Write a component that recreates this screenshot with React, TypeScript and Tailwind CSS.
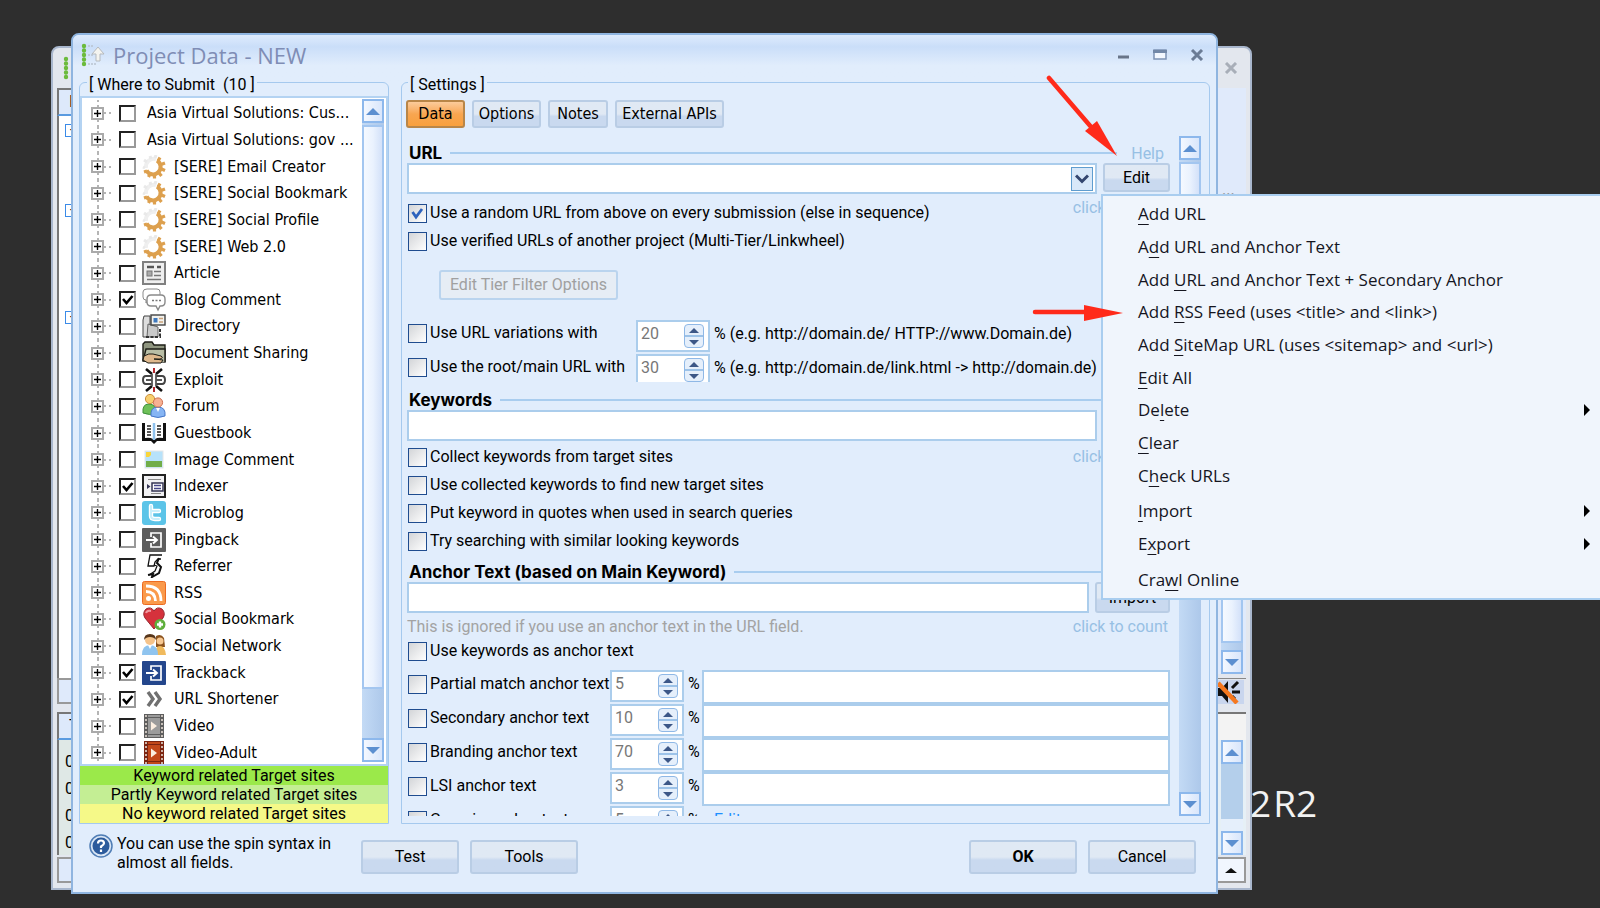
import React from 'react';

const LABEL_FONT = "font-['Roboto','Liberation_Sans',sans-serif]";
const TREE_FONT = "font-['DejaVu_Sans_Condensed','DejaVu_Sans',sans-serif]";
const MENU_FONT = "font-['Open_Sans','Noto_Sans',sans-serif]";

const GearIcon = () => (
  <svg viewBox="0 0 24 24" className="h-6 w-6">
    <path d="M4 13a8 8 0 0 1 10-9" fill="none" stroke="#efefef" strokeWidth="4" />
    <path d="M3 13l-2-1M5 7L2 5M9 4L8 1M13 3l1-3" stroke="#e9e9e9" strokeWidth="3" />
    <path d="M15 5.500a7.500 7.500 0 1 1-10.500 10" fill="none" stroke="#dda04e" strokeWidth="4" />
    <path d="M16 6l2-3.500M19 9.500l4-1.500M19.500 14l3.500 1.500M17 18l2.500 3M12.500 20v3.500M8 19l-1.500 3M5 16l-3 1" stroke="#dda04e" strokeWidth="3.200" />
  </svg>
);

const ArticleIcon = () => (
  <svg viewBox="0 0 24 24" className="h-6 w-6">
    <rect x="1" y="1" width="22" height="22" fill="#efefef" stroke="#808080" strokeWidth="2" />
    <path d="M5 6h7M15 6h4" stroke="#555" strokeWidth="2.4" />
    <rect x="5" y="10" width="5" height="5" fill="#aaa" stroke="#777" />
    <path d="M12 10.500h7M12 14.500h7M5 18.500h14" stroke="#777" strokeWidth="1.6" />
  </svg>
);

const BlogIcon = () => (
  <svg viewBox="0 0 24 24" className="h-6 w-6" fill="#fff" stroke="#8a8a8a">
    <path d="M5 1h10q3 0 3 3v5q0 3-3 3H6l-2 3v-3q-3 0-3-3V4q0-3 4-3z" />
    <path d="M9 7h10q4 0 4 4v3q0 4-4 4h-1l-2 4-2-4H9q-4 0-4-4v-3q0-4 4-4z" strokeWidth="1.4" />
    <path d="M10 12.500h2M13.500 12.500h2M17 12.500h2" stroke="#777" strokeWidth="1.6" />
  </svg>
);

const DirectoryIcon = () => (
  <svg viewBox="0 0 24 24" className="h-6 w-6">
    <path d="M2 2h6v17l-3 4H1V6z" fill="#ddd" stroke="#444" />
    <path d="M6 10l10 3v10H5z" fill="#c9c9c9" stroke="#666" />
    <path d="M4 23h15M18 15v7" stroke="#333" strokeWidth="2" strokeDasharray="3 1.500" />
    <rect x="9" y="1" width="14" height="10" fill="#f2f2ee" stroke="#444" strokeWidth="1.4" />
    <rect x="11.500" y="4" width="4" height="4.500" fill="#3f78bd" />
    <path d="M17 4.500h4M17 8h4" stroke="#caa27b" strokeWidth="1.600" />
  </svg>
);

const SharingIcon = () => (
  <svg viewBox="0 0 24 24" className="h-6 w-6" stroke="#1d1d16" strokeWidth="1.4">
    <path d="M1 20V3l2-2h7l2 3h11v17z" fill="#8f957f" />
    <path d="M1 20l3-12h19v13" fill="#b9bea6" />
    <path d="M2 15q5-3 9-2l8 2q3 2-1 3l-6 0 9 1-2 3H6l-5-3z" fill="#dfb98d" strokeWidth="1" />
  </svg>
);

const ExploitIcon = () => (
  <svg viewBox="0 0 24 24" className="h-6 w-6" fill="none">
    <path d="M12 0v5M12 19v5" stroke="#b3272d" strokeWidth="2" />
    <path d="M4 1l6 5M20 1l-6 5M4 23l6-5M20 23l-6-5" stroke="#111" strokeWidth="2.600" />
    <path d="M10 8H4q-3 0-3 4t3 4h6M14 8h6q3 0 3 4t-3 4h-6" stroke="#444" strokeWidth="2" />
    <path d="M4 12h6M14 12h6M10 6v12M14 6v12" stroke="#555" strokeWidth="1.800" />
  </svg>
);

const ForumIcon = () => (
  <svg viewBox="0 0 24 24" className="h-6 w-6">
    <path d="M1 19q-1-9 6-9t7 9q-6 3-13 0z" fill="#6fc058" stroke="#3d8f3b" />
    <circle cx="8" cy="5" r="4.600" fill="#f8cf70" stroke="#c98d3a" />
    <path d="M9 22q-1-9 7-9t7 9q-7 3-14 0z" fill="#86b5f4" stroke="#4778c9" />
    <circle cx="16" cy="8.500" r="4.600" fill="#f6b193" stroke="#cd6e50" />
    <path d="M14 14l2 4 2-4z" fill="#fff" />
  </svg>
);

const GuestbookIcon = () => (
  <svg viewBox="0 0 24 24" className="h-6 w-6">
    <path d="M0 2h24v18h-9l-3 3-3-3H0z" fill="#111" />
    <path d="M3 1q6-1 8 1v16q-3-2-8-1zM21 1q-6-1-8 1v16q3-2 8-1z" fill="#fff" />
    <path d="M12 2v17" stroke="#8fc2ee" strokeWidth="2.500" />
    <path d="M5 5h4M5 8h4M5 11h4M5 14h4M15 5h4M15 8h4M15 11h4M15 14h4" stroke="#222" strokeWidth="1.300" />
  </svg>
);

const ImageIcon = () => (
  <svg viewBox="0 0 24 24" className="h-6 w-6">
    <rect x="3" y="3" width="18" height="17" fill="#b7e2fa" stroke="#e6e6e6" />
    <path d="M4 13h16v6H4z" fill="#71ad48" />
    <path d="M4 4h5v3L7 9H4z" fill="#f9d53b" />
  </svg>
);

const IndexerIcon = () => (
  <svg viewBox="0 0 24 24" className="h-6 w-6">
    <rect x="1" y="1" width="22" height="22" fill="#f1f1f3" stroke="#222" strokeWidth="2" />
    <path d="M6 5.500h13M9 19.500h10" stroke="#888" />
    <rect x="10" y="9" width="11" height="8" fill="#fff" stroke="#333353" strokeWidth="1.500" />
    <path d="M12 11.500h7M12 14.500h7" stroke="#444488" strokeWidth="1.400" />
    <path d="M5 10l3.500 2.500L5 15z" fill="#333353" />
  </svg>
);

const TwitterIcon = () => (
  <svg viewBox="0 0 24 24" className="h-6 w-6">
    <rect width="24" height="24" rx="3" fill="#5cc4e8" />
    <path d="M9 5v10q0 3 4 3h4M9 10h8" fill="none" stroke="#fff" strokeWidth="4.400" strokeLinecap="round" />
    <path d="M9 5v10q0 3 4 3h4M9 10h8" fill="none" stroke="#c9effb" strokeWidth="2" strokeLinecap="round" />
  </svg>
);

const EnterIcon = ({ color }: { color: string }) => (
  <svg viewBox="0 0 24 24" className="h-6 w-6" fill="none">
    <rect width="24" height="24" rx="1" fill={color} />
    <path d="M9 9V5h10v14H9v-4" stroke="#fff" strokeWidth="1.700" />
    <path d="M4 12h10M11 8.500l4 3.500-4 3.500" stroke="#fff" strokeWidth="1.900" />
  </svg>
);

const ReferrerIcon = () => (
  <svg viewBox="0 0 24 24" className="h-6 w-6" fill="none" stroke="#111">
    <path d="M20 1H8L6 12h6l1-4 3-3h3" strokeWidth="1.300" />
    <path d="M17 4l-2 5 4 4-2 6-7 4 1-3-5 1" strokeWidth="2" />
    <path d="M12 11l3 1-2 5-6 4" strokeWidth="1.200" />
  </svg>
);

const RssIcon = () => (
  <svg viewBox="0 0 24 24" className="h-6 w-6">
    <rect x="0.500" y="0.500" width="23" height="23" rx="2" fill="#fa9a4b" stroke="#ec6b22" />
    <circle cx="6.500" cy="17.500" r="2.500" fill="#fff" />
    <path d="M4 10.500q9 0 9.500 9.500M4 5q15 0 15 15" fill="none" stroke="#fff" strokeWidth="2.800" />
  </svg>
);

const HeartIcon = () => (
  <svg viewBox="0 0 24 24" className="h-6 w-6">
    <path d="M12 22L3 11Q0 6 4 2q5-3 8 2 3-5 8-2 4 4 1 9z" fill="#d5323c" stroke="#962830" />
    <path d="M4 6q1-3 5-2" fill="none" stroke="#f09aa0" strokeWidth="2" />
    <circle cx="18" cy="17.500" r="5.500" fill="#5faf3c" />
    <path d="M18 14.500v6M15 17.500h6" stroke="#fff" strokeWidth="2.400" />
  </svg>
);

const NetworkIcon = () => (
  <svg viewBox="0 0 24 24" className="h-6 w-6">
    <path d="M14 2q5-3 8 2l1 9h-9z" fill="#8c531e" />
    <circle cx="18" cy="7" r="3.500" fill="#f7c892" />
    <path d="M13 21q0-9 5-9t6 9z" fill="#f0ba5d" />
    <circle cx="8" cy="6" r="5" fill="#f5c38a" />
    <path d="M2 6Q2 0 8 0t6 6q-2-3-6-3T2 6z" fill="#57351a" />
    <path d="M0 21q0-10 8-10t8 10z" fill="#8fc4ef" />
    <path d="M6 11l2 4 2-4z" fill="#fff" />
  </svg>
);

const ShortenerIcon = () => (
  <svg viewBox="0 0 24 24" className="h-6 w-6" fill="none" stroke="#707070" strokeWidth="3.400">
    <path d="M6 5l5 7-5 7M13 5l5 7-5 7" />
  </svg>
);

const VideoIcon = ({ color, edge }: { color: string; edge: string }) => (
  <svg viewBox="0 0 24 24" className="h-6 w-6">
    <rect x="2" width="20" height="24" fill={edge} />
    <rect x="6" y="1" width="12" height="22" fill={color} />
    <path d="M4 1v22M20 1v22" stroke="#e3d9d0" strokeWidth="1.600" strokeDasharray="2 2" />
    <path d="M6 3.500h12M6 20.500h12" stroke={edge} />
    <path d="M9 7.500l6 4.500-6 4.500z" fill="#fbeee0" />
  </svg>
);

const ListArrowIcon = () => (
  <svg viewBox="0 0 24 24" className="h-6 w-6">
    <path d="M3 3v0M3 7.500v0M3 12v0M3 16.500v0M3 21v0" stroke="#6cbb3c" strokeWidth="4.400" strokeLinecap="round" />
    <path d="M7 3h5M7 12h5M7 21h8" stroke="#b9c3cf" strokeWidth="1.500" strokeDasharray="2 1" />
    <path d="M17 4l6 7h-4v7h-4v-7h-4z" fill="#f4f4f0" stroke="#b5b9bd" />
  </svg>
);

interface TreeEntry {
  name: string;
  checked?: boolean;
  icon?: React.ReactNode;
}

const tree: TreeEntry[] = [
  { name: 'Asia Virtual Solutions: Cus...' },
  { name: 'Asia Virtual Solutions: gov ...' },
  { name: '[SERE] Email Creator', icon: <GearIcon /> },
  { name: '[SERE] Social Bookmark', icon: <GearIcon /> },
  { name: '[SERE] Social Profile', icon: <GearIcon /> },
  { name: '[SERE] Web 2.0', icon: <GearIcon /> },
  { name: 'Article', icon: <ArticleIcon /> },
  { name: 'Blog Comment', checked: true, icon: <BlogIcon /> },
  { name: 'Directory', icon: <DirectoryIcon /> },
  { name: 'Document Sharing', icon: <SharingIcon /> },
  { name: 'Exploit', icon: <ExploitIcon /> },
  { name: 'Forum', icon: <ForumIcon /> },
  { name: 'Guestbook', icon: <GuestbookIcon /> },
  { name: 'Image Comment', icon: <ImageIcon /> },
  { name: 'Indexer', checked: true, icon: <IndexerIcon /> },
  { name: 'Microblog', icon: <TwitterIcon /> },
  { name: 'Pingback', icon: <EnterIcon color="#5d5d5d" /> },
  { name: 'Referrer', icon: <ReferrerIcon /> },
  { name: 'RSS', icon: <RssIcon /> },
  { name: 'Social Bookmark', icon: <HeartIcon /> },
  { name: 'Social Network', icon: <NetworkIcon /> },
  { name: 'Trackback', checked: true, icon: <EnterIcon color="#24468c" /> },
  { name: 'URL Shortener', checked: true, icon: <ShortenerIcon /> },
  { name: 'Video', icon: <VideoIcon color="#9b9b9b" edge="#5e5e5e" /> },
  { name: 'Video-Adult', icon: <VideoIcon color="#c2481a" edge="#7c2410" /> }
];

const anchors = [
  { label: 'Partial match anchor text', value: '5' },
  { label: 'Secondary anchor text', value: '10' },
  { label: 'Branding anchor text', value: '70' },
  { label: 'LSI anchor text', value: '3' }
];

// text before the accelerator, the accelerator, text after it
const menu = [
  [
    { pre: '', key: 'A', post: 'dd URL' },
    { pre: 'A', key: 'd', post: 'd URL and Anchor Text' },
    { pre: 'Add ', key: 'U', post: 'RL and Anchor Text + Secondary Anchor' },
    { pre: 'Add ', key: 'R', post: 'SS Feed (uses <title> and <link>)' },
    { pre: 'Add ', key: 'S', post: 'iteMap URL (uses <sitemap> and <url>)' },
    { pre: '', key: 'E', post: 'dit All' },
    { pre: 'De', key: 'l', post: 'ete', sub: true },
    { pre: '', key: 'C', post: 'lear' },
    { pre: 'C', key: 'h', post: 'eck URLs' }
  ],
  [
    { pre: '', key: 'I', post: 'mport', sub: true },
    { pre: 'E', key: 'x', post: 'port', sub: true }
  ],
  [{ pre: 'Cra', key: 'w', post: 'l Online' }]
];

const Triangle = ({ up }: { up?: boolean }) => (
  <svg viewBox="0 0 14 7" className="h-[7px] w-3.5">
    <path d={up ? 'M0 7L7 0l7 7z' : 'M0 0l7 7 7-7z'} fill="#5c8fd0" />
  </svg>
);

const ScrollButton = ({ up }: { up?: boolean }) => (
  <button
    aria-label={up ? 'Scroll up' : 'Scroll down'}
    className="flex h-6 w-full shrink-0 items-center justify-center border-2 border-[#8db8ec] bg-gradient-to-r from-[#f4f8ff] to-[#d9e6fb]"
  >
    <Triangle up={up} />
  </button>
);

const ScrollBar = ({ thumb, top = true, className = '' }: { thumb: string; top?: boolean; className?: string }) => (
  <div className={`flex w-[22px] shrink-0 flex-col bg-gradient-to-r from-[#c3daf5] to-[#adc8ea] ${className}`}>
    {top && <ScrollButton up />}
    <div className={`${thumb} mt-0.5 border-2 border-[#a3c6f0] bg-gradient-to-r from-[#f5f9ff] via-[#eaf2fe] to-[#d3e1f9]`} />
    <div className="flex-1" />
    <ScrollButton />
  </div>
);

const Check = ({ label, checked }: { label: string; checked?: boolean }) => (
  <label className="flex items-center gap-[3px] whitespace-nowrap pl-px leading-5">
    <span className="grid">
      <input
        type="checkbox"
        defaultChecked={checked}
        className="peer col-start-1 row-start-1 h-[19px] w-[19px] appearance-none border border-[#1f4c8f] bg-gradient-to-br from-[#d3d5d8] to-white"
      />
      <svg viewBox="0 0 19 19" className="pointer-events-none col-start-1 row-start-1 hidden h-[19px] w-[19px] peer-checked:block">
        <path d="M4.500 8l3.500 5 6-8" fill="none" stroke="#2d62bd" strokeWidth="2.800" />
      </svg>
    </span>
    {label}
  </label>
);

const Spin = ({ label, value }: { label: string; value: string }) => (
  <div className="flex h-8 w-[74px] shrink-0 items-center border-2 border-[#abcdec] bg-white pr-1">
    <input aria-label={label} defaultValue={value} className="w-0 flex-1 pl-[3px] pb-1 text-[#777] outline-none" />
    <div className="flex h-6 w-5 flex-col divide-y-2 divide-[#9cc2e8] rounded-sm border border-[#8fb8e6] bg-[#e5effb]">
      <button aria-label="Increase" className="flex flex-1 items-center justify-center">
        <svg viewBox="0 0 10 5" className="h-[5px] w-2.5"><path d="M0 5l5-5 5 5z" fill="#3c5787" /></svg>
      </button>
      <button aria-label="Decrease" className="flex flex-1 items-center justify-center">
        <svg viewBox="0 0 10 5" className="h-[5px] w-2.5"><path d="M0 0l5 5 5-5z" fill="#3c5787" /></svg>
      </button>
    </div>
  </div>
);

const Heading = ({ title, children }: { title: string; children?: React.ReactNode }) => (
  <div className="flex h-5 items-center gap-2">
    <h3 className="pl-0.5 font-['Inter','Roboto',sans-serif] text-[17px] font-bold leading-5">{title}</h3>
    <div className="h-0.5 flex-1 bg-[#a9cdef]" />
    {children}
  </div>
);

const Button = ({ children, className = '' }: { children: React.ReactNode; className?: string }) => (
  <button
    className={`shrink-0 rounded-[3px] border-2 border-[#b9cde5] bg-gradient-to-b from-[#e0e9f4] from-50% to-[#c9d9ef] to-60% ${className}`}
  >
    {children}
  </button>
);

const CountLink = () => (
  <a href="#count" className="ml-auto pr-0.5 leading-[18px] text-[#97c0e4]">click to count</a>
);

const BackWindow = () => (
  <div className="absolute bottom-[18px] left-[51px] right-[348px] top-[46px] flex justify-between overflow-hidden rounded-t-lg border-2 border-[#a9b7cd] bg-[#e3e7ee]">
    <div className="flex w-[18px] flex-col pl-1">
      <div className="flex h-10 items-center pl-1.5">
        <svg viewBox="0 0 6 24" className="h-6 w-1.5">
          <path d="M3 3v0M3 7.500v0M3 12v0M3 16.500v0M3 21v0" stroke="#6cbb3c" strokeWidth="4.400" strokeLinecap="round" />
        </svg>
      </div>
      <div className="h-7 border-b-2 border-l-2 border-t-2 border-b-[#5a9be0] border-l-[#777] border-t-[#777] bg-[#dde9fb] pl-2.5 text-base leading-6">I</div>
      <div className="flex flex-1 flex-col border-l-2 border-[#777] bg-white pl-1.5 pt-2">
        <div className="mb-[67px] h-[13px] border border-r-0 border-[#3b8be8] pl-1 leading-[10px]">-</div>
        <div className="mb-[94px] h-[13px] border border-r-0 border-[#3b8be8] pl-1 leading-[10px]">-</div>
        <div className="h-[13px] border border-r-0 border-[#3b8be8] pl-1 leading-[10px]">-</div>
      </div>
      <div className="mb-2 h-[26px] border-2 border-r-0 border-[#999] bg-[#dfeafb]" />
      <div className="h-7 border-b-2 border-l-2 border-t-2 border-[#777] border-b-[#5a9be0] bg-[#dde9fb] pl-2.5 text-base leading-6">T</div>
      <div className="h-[115px] border-l-2 border-[#777] bg-[#dfe8e6] pl-1.5 pt-2 text-base leading-[27px]">
        <div>0</div>
        <div>0</div>
        <div>0</div>
        <div>0</div>
      </div>
      <div className="mb-[5px] mt-0.5 h-[26px] border-2 border-r-0 border-[#999] bg-[#dfeafb]" />
    </div>
    <div className="flex w-8 flex-col pr-1">
      <div className="flex h-10 items-center pl-1.5">
        <svg viewBox="0 0 14 12" className="h-3 w-3.5"><path d="M2 1l10 10M12 1L2 11" stroke="#a8aeb8" strokeWidth="3" /></svg>
      </div>
      <div className="flex flex-1 flex-col bg-[#e0eafb]">
        <div className="h-[107px] pl-1 pt-[94px] leading-none text-[#777]">...</div>
        <div className="flex flex-1 pl-[3px]">
          <ScrollBar thumb="flex-[60]" top={false} />
        </div>
      </div>
      <div className="mb-2 mt-1 flex h-[26px] items-center border-t border-[#888]">
        <svg viewBox="0 0 26 24" className="h-6 w-[26px]">
          <rect width="26" height="24" fill="#c9d6ee" />
          <path d="M0 8h4l6-7v22l-6-7H0z" fill="#111" />
          <path d="M14 8l6-6M14 12h8M14 16l3 3" stroke="#111" strokeWidth="3" />
          <path d="M0 3l19 20" stroke="#f5781e" strokeWidth="4.500" />
        </svg>
      </div>
      <div className="h-7 border-t-2 border-[#777] bg-[#f3f3f3]" />
      <div className="flex h-[115px] bg-[#e6f0f6] pl-[3px]">
        <div className="flex w-[22px] flex-col bg-[#b4cfeb]">
          <ScrollButton up />
          <div className="flex-1" />
          <div className="h-3 bg-[#e5effb]" />
          <ScrollButton />
        </div>
      </div>
      <div className="mb-[5px] mt-0.5 flex h-[26px] items-center border-2 border-l-0 border-[#999] bg-[#f1f6fe] pl-[7px]">
        <svg viewBox="0 0 12 5" className="h-[5px] w-3"><path d="M0 5l6-5 6 5z" fill="#111" /></svg>
      </div>
    </div>
  </div>
);

const TreeRow = ({ entry }: { entry: TreeEntry }) => (
  <li className="flex items-center">
    <div className="flex w-[13px] flex-col items-center self-stretch">
      <span className="flex-1 border-l-2 border-dotted border-[#b5b5b5]" />
      <button aria-label={`Expand ${entry.name}`} className="flex h-[13px] w-[13px] items-center justify-center border-2 border-[#aaa] bg-white">
        <svg viewBox="0 0 9 9" className="h-[9px] w-[9px]"><path d="M4.500 1v7M1 4.500h7" stroke="#000" strokeWidth="1.400" /></svg>
      </button>
      <span className="flex-1 border-l-2 border-dotted border-[#b5b5b5]" />
    </div>
    <span className="w-[7px] border-t-2 border-dotted border-[#b5b5b5]" />
    <label className="flex items-center pl-2 whitespace-nowrap">
      <span className="grid">
        <input
          type="checkbox"
          defaultChecked={entry.checked}
          className="peer col-start-1 row-start-1 h-[17px] w-[17px] appearance-none border-2 border-b-[#999] border-l-[#222] border-r-[#999] border-t-[#222] bg-white"
        />
        <svg viewBox="0 0 17 17" className="pointer-events-none col-start-1 row-start-1 hidden h-[17px] w-[17px] peer-checked:block">
          <path d="M4 8l3.500 4 6-7" fill="none" stroke="#000" strokeWidth="2.600" />
        </svg>
      </span>
      {entry.icon && <span className="ml-1.5">{entry.icon}</span>}
      <span className={entry.icon ? 'pl-2' : 'pl-[11px]'}>{entry.name}</span>
    </label>
  </li>
);

const SubmitPanel = () => (
  <section className="flex w-[310px] shrink-0 flex-col rounded-t-md border border-[#a5c9ee]">
    <h2 className="-mt-2 ml-[7px] self-start whitespace-pre bg-[#e1edfc] px-0.5 leading-5">[ Where to Submit  (10 ]</h2>
    <div className="mt-px flex min-h-0 flex-1 overflow-hidden border-2 border-[#b4d3f2] bg-white">
      <ul className={`-mb-0.5 grid flex-1 auto-rows-fr pl-[9px] pt-0.5 text-base ${TREE_FONT}`}>
        {tree.map((entry, index) => (
          <TreeRow key={index} entry={entry} />
        ))}
      </ul>
      <ScrollBar thumb="h-[85%]" className="mr-0.5 mb-0.5 mt-px" />
    </div>
    <div className="text-center leading-[19px]">
      <div className="bg-[#9be94a]">Keyword related Target sites</div>
      <div className="bg-[#c4ee94]">Partly Keyword related Target sites</div>
      <div className="bg-[#f5f988]">No keyword related Target sites</div>
    </div>
  </section>
);

const SettingsForm = () => (
  <div className="mr-[9px] flex min-w-0 flex-1 flex-col overflow-hidden pt-2 *:shrink-0">
    <Heading title="URL">
      <a href="#help" className="px-1.5 pt-0.5 text-[#97c0e4]">Help</a>
    </Heading>
    <div className="flex gap-1.5">
      <div className="relative flex h-[31px] flex-1 border-2 border-[#abcdec] bg-white">
        <select aria-label="URL" className="flex-1 appearance-none bg-white outline-none" />
        <span className="pointer-events-none absolute right-0.5 top-0.5 flex h-6 w-[22px] items-center justify-center border border-[#5f9dcf] bg-[#d8e8f9]">
          <svg viewBox="0 0 14 10" className="h-2.5 w-3.5"><path d="M1 1.500l6 6 6-6" fill="none" stroke="#33466f" strokeWidth="3" /></svg>
        </span>
      </div>
      <Button className="h-[29px] w-[67px]">Edit</Button>
    </div>
    <div className="mt-[5px] flex h-7">
      <Check checked label="Use a random URL from above on every submission (else in sequence)" />
      <CountLink />
    </div>
    <div className="flex h-7">
      <Check label="Use verified URLs of another project (Multi-Tier/Linkwheel)" />
    </div>
    <button disabled className="ml-8 mt-[15px] h-[30px] w-[179px] self-start rounded-[3px] border-2 border-[#bad4ee] bg-[#e6edf5] leading-5 text-[#a0a0a0]">
      Edit Tier Filter Options
    </button>
    <div className="mt-5 flex h-[34px] items-start">
      <div className="w-[229px] pt-[3px]"><Check label="Use URL variations with" /></div>
      <Spin label="URL variations percentage" value="20" />
      <span className="pl-1 pt-0.5">% (e.g. http://domain.de/ HTTP://www.Domain.de)</span>
    </div>
    <div className="flex h-7 items-start overflow-hidden">
      <div className="w-[229px] pt-[3px]"><Check label="Use the root/main URL with" /></div>
      <Spin label="Root URL percentage" value="30" />
      <span className="pl-1 pt-0.5">{'% (e.g. http://domain.de/link.html -> http://domain.de)'}</span>
    </div>

    <div className="mt-2"><Heading title="Keywords" /></div>
    <input aria-label="Keywords" className="mr-[73px] h-[31px] border-2 border-[#abcdec] bg-white px-1 outline-none" />
    <div className="mt-0.5 flex h-7 items-center">
      <Check label="Collect keywords from target sites" />
      <CountLink />
    </div>
    <div className="flex h-7"><Check label="Use collected keywords to find new target sites" /></div>
    <div className="flex h-7"><Check label="Put keyword in quotes when used in search queries" /></div>
    <div className="flex h-7"><Check label="Try searching with similar looking keywords" /></div>

    <div className="mt-[7px]"><Heading title="Anchor Text (based on Main Keyword)" /></div>
    <div className="flex gap-1.5">
      <input aria-label="Anchor text" className="h-[31px] w-0 flex-1 border-2 border-[#abcdec] bg-white px-1 outline-none" />
      <Button className="h-[31px] w-[75px]">Import</Button>
    </div>
    <div className="mt-1 flex h-5 items-center text-[#a3a3a3]">
      This is ignored if you use an anchor text in the URL field.
      <CountLink />
    </div>
    <div className="flex h-7"><Check label="Use keywords as anchor text" /></div>
    <div className="mt-[5px] flex flex-col">
      {anchors.map((anchor) => (
        <div key={anchor.label} className="flex h-[34px] items-start">
          <div className="w-[203px] pt-1"><Check label={anchor.label} /></div>
          <Spin label={`${anchor.label} percentage`} value={anchor.value} />
          <span className="w-[18px] pl-1 pt-0.5">%</span>
          <input aria-label={`${anchor.label} phrases`} className="h-[34px] w-0 flex-1 border-2 border-[#abcdec] bg-white px-1 outline-none" />
        </div>
      ))}
      <div className="flex h-[34px] items-start">
        <div className="w-[203px] pt-1"><Check label="Generic anchor text" /></div>
        <Spin label="Generic anchor text percentage" value="5" />
        <span className="w-[18px] pl-1 pt-0.5">%</span>
        <a href="#edit" className="pl-3 pt-0.5 text-[#1e90ff]">Edit</a>
      </div>
    </div>
  </div>
);

const SettingsPanel = () => (
  <section className="flex min-w-0 flex-1 flex-col rounded-t-md border border-[#a5c9ee]">
    <h2 className="-mt-2 ml-1.5 self-start bg-[#e1edfc] px-0.5 leading-5">[ Settings ]</h2>
    <div className={`mt-[5px] flex gap-[7px] pl-1 text-base ${TREE_FONT}`}>
      <button className="h-7 w-[59px] rounded-[3px] border-2 border-[#b98648] bg-gradient-to-b from-[#fbcb9a] via-[#f8a650] to-[#f9a03c]">Data</button>
      <Button className="h-7 w-[69px]">Options</Button>
      <Button className="h-7 w-[60px]">Notes</Button>
      <Button className="h-7 w-[109px]">External APIs</Button>
    </div>
    <div className="mb-[7px] mr-2 mt-[7px] flex min-h-0 flex-1 pl-[5px]">
      <SettingsForm />
      <ScrollBar thumb="h-[56%]" className="mt-px" />
    </div>
  </section>
);

const ProjectDialog = () => (
  <main className="relative flex flex-1 flex-col rounded-t-lg border-2 border-[#8fb5e0] bg-[#e1edfc] px-1.5">
    <header className="-mx-1.5 flex h-[47px] items-start gap-1.5 rounded-t-md bg-gradient-to-b from-[#deebfd] via-[#cadef9] via-25% to-[#e1edfc] to-65% pl-2 pr-3 pt-2">
      <ListArrowIcon />
      <h1 className={`-mt-0.5 flex-1 pl-0.5 text-[22px] leading-7 text-[#7f8db5] ${MENU_FONT}`}>Project Data - NEW</h1>
      <div className="flex gap-[23px] pt-1.5">
        <button aria-label="Minimize"><svg viewBox="0 0 12 12" className="h-3 w-3"><path d="M0 8h11" stroke="#687589" strokeWidth="3" /></svg></button>
        <button aria-label="Maximize">
          <svg viewBox="0 0 14 12" className="h-3 w-3.5"><rect x="1" y="1" width="12" height="9" fill="#f3f8ff" stroke="#7d93b5" strokeWidth="1.500" /><path d="M0 2.500h14" stroke="#7288a8" strokeWidth="3" /></svg>
        </button>
        <button aria-label="Close"><svg viewBox="0 0 14 12" className="h-3 w-3.5"><path d="M2 1l10 10M12 1L2 11" stroke="#6b7c95" strokeWidth="3" /></svg></button>
      </div>
    </header>
    <div className="flex min-h-0 flex-1 gap-3">
      <SubmitPanel />
      <SettingsPanel />
    </div>
    <footer className="flex h-[68px] shrink-0 items-start pl-2.5 pr-3.5 pt-4">
      <svg viewBox="0 0 24 24" className="-mt-1.5 h-6 w-6">
        <circle cx="12" cy="12" r="11" fill="#dbe7f5" stroke="#4f7db5" strokeWidth="1.500" />
        <circle cx="12" cy="12" r="8.500" fill="#2c5b9c" />
        <path d="M9 9.500q0-3 3-3t3 2.700q0 1.500-3 3.300v1.500M12 15.500v2.500" fill="none" stroke="#fff" strokeWidth="2.200" />
      </svg>
      <p className="-mt-1.5 w-[248px] pl-1 leading-[19px]">You can use the spin syntax in<br />almost all fields.</p>
      <Button className="h-[34px] w-[98px]">Test</Button>
      <Button className="ml-[11px] h-[34px] w-[108px]">Tools</Button>
      <Button className="ml-auto h-[34px] w-[108px] font-bold">OK</Button>
      <Button className="ml-[11px] h-[34px] w-[108px]">Cancel</Button>
    </footer>
  </main>
);

const ContextMenu = () => (
  <div
    role="menu"
    className={`absolute left-[1101px] right-0 top-[194px] flex h-[406px] flex-col border-2 border-r-0 border-[#a9cdef] bg-[#f0f5fc] py-0.5 text-[17px] text-[#15151f] ${MENU_FONT}`}
  >
    {menu.map((group, index) => (
      <React.Fragment key={index}>
        {index > 0 && <div className="h-[3px]" />}
        {group.map((item) => (
          <button key={item.post} role="menuitem" className="flex flex-1 items-center justify-between pl-[35px] pr-2.5 text-left leading-7">
            <span>
              {item.pre}
              <span className="underline underline-offset-4">{item.key}</span>
              {item.post}
            </span>
            {'sub' in item && <svg viewBox="0 0 6 12" className="h-3 w-1.5"><path d="M0 0l6 6-6 6z" fill="#000" /></svg>}
          </button>
        ))}
      </React.Fragment>
    ))}
  </div>
);

const App: React.FC = () => {
  return (
    <div className={`relative flex h-screen overflow-hidden bg-[#2e2e2e] pb-[14px] pl-[71px] pr-[382px] pt-[33px] text-base text-black ${LABEL_FONT}`}>
      <div className={`absolute left-[1250px] top-[777px] flex gap-0.5 text-[37px] leading-[52px] text-[#f2f2f2] ${MENU_FONT}`}>
        <span>2</span>
        <span>R2</span>
      </div>
      <BackWindow />
      <ProjectDialog />
      <ContextMenu />
      {/* Pointers to the Edit button and the RSS entry */}
      <svg viewBox="0 0 72 82" className="absolute left-[1046px] top-[75px] h-[82px] w-[72px]">
        <path d="M3 3l43 50" stroke="#ff2a1a" strokeWidth="4.500" strokeLinecap="round" />
        <path d="M39 56l12-10 20 35z" fill="#ff2a1a" />
      </svg>
      <svg viewBox="0 0 92 16" className="absolute left-[1032px] top-[305px] h-4 w-[92px]">
        <path d="M3 7h52" stroke="#ff2a1a" strokeWidth="4.500" strokeLinecap="round" />
        <path d="M52 0l39 8-39 8z" fill="#ff2a1a" />
      </svg>
    </div>
  );
};

export default App;
